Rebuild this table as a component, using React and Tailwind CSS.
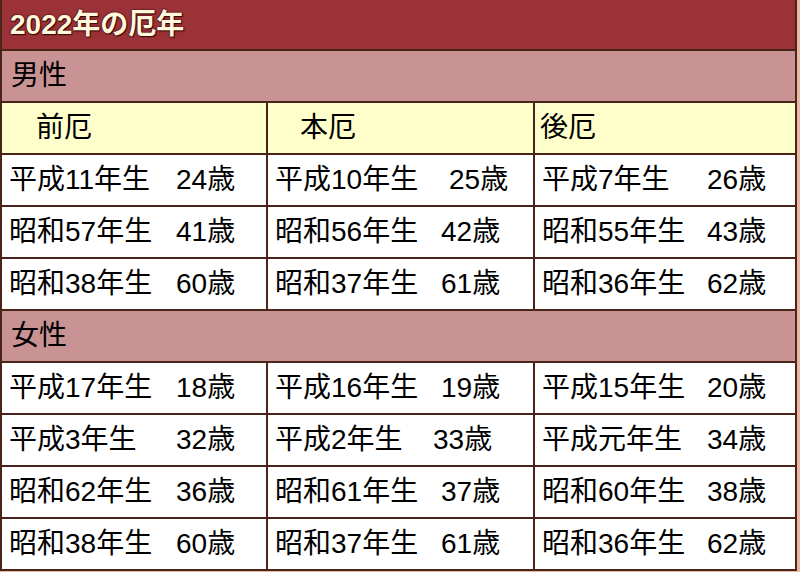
import React from "react";

const male = [
  [["平成11年生", "24歳", "w-[167px]"], ["平成10年生", "25歳", "w-[174px]"], ["平成7年生", "26歳", "w-[165px]"]],
  [["昭和57年生", "41歳", "w-[167px]"], ["昭和56年生", "42歳", "w-[166px]"], ["昭和55年生", "43歳", "w-[165px]"]],
  [["昭和38年生", "60歳", "w-[167px]"], ["昭和37年生", "61歳", "w-[166px]"], ["昭和36年生", "62歳", "w-[165px]"]],
];
const female = [
  [["平成17年生", "18歳", "w-[167px]"], ["平成16年生", "19歳", "w-[166px]"], ["平成15年生", "20歳", "w-[165px]"]],
  [["平成3年生", "32歳", "w-[167px]"], ["平成2年生", "33歳", "w-[158px]"], ["平成元年生", "34歳", "w-[165px]"]],
  [["昭和62年生", "36歳", "w-[167px]"], ["昭和61年生", "37歳", "w-[166px]"], ["昭和60年生", "38歳", "w-[165px]"]],
  [["昭和38年生", "60歳", "w-[167px]"], ["昭和37年生", "61歳", "w-[166px]"], ["昭和36年生", "62歳", "w-[165px]"]],
];

function DataRow({ row }) {
  return (
    <div className="grid grid-cols-[264px_265px_260px] gap-[2px] h-[50px]">
      {row.map(([name, age, w], i) => (
        <div key={i} className="bg-white flex items-center pl-[7px] whitespace-nowrap">
          <span className={`inline-block ${w}`}>{name}</span>
          <span>{age}</span>
        </div>
      ))}
    </div>
  );
}

function Section({ label }) {
  return (
    <div className="h-[50px] bg-[#c99394] flex items-center pl-[9px]">{label}</div>
  );
}

export default function App() {
  return (
    <div className="w-[800px] h-[572px] overflow-hidden bg-[#e9b9a6] font-['Liberation_Sans','Noto_Sans_CJK_JP',sans-serif] text-[28px] text-black leading-none">
      <div className="w-[797px] bg-[#4a2418] px-[2px] pb-[2px] flex flex-col gap-[2px]">
        <div className="h-[49px] bg-[#9a3238] flex items-center pl-[8px]">
          <span className="font-bold text-[28px] text-[#fff8dc] [text-shadow:0_0_2px_#3a0606,0_0_1px_#3a0606,1px_1px_1px_#3a0606]">
            2022年の厄年
          </span>
        </div>
        <Section label="男性" />
        <div className="grid grid-cols-[264px_265px_260px] gap-[2px] h-[50px]">
          <div className="bg-[#ffffcc] flex items-center pl-[34px]">前厄</div>
          <div className="bg-[#ffffcc] flex items-center pl-[32px]">本厄</div>
          <div className="bg-[#ffffcc] flex items-center pl-[5px]">後厄</div>
        </div>
        {male.map((r, i) => (
          <DataRow key={"m" + i} row={r} />
        ))}
        <Section label="女性" />
        {female.map((r, i) => (
          <DataRow key={"f" + i} row={r} />
        ))}
      </div>
    </div>
  );
}
